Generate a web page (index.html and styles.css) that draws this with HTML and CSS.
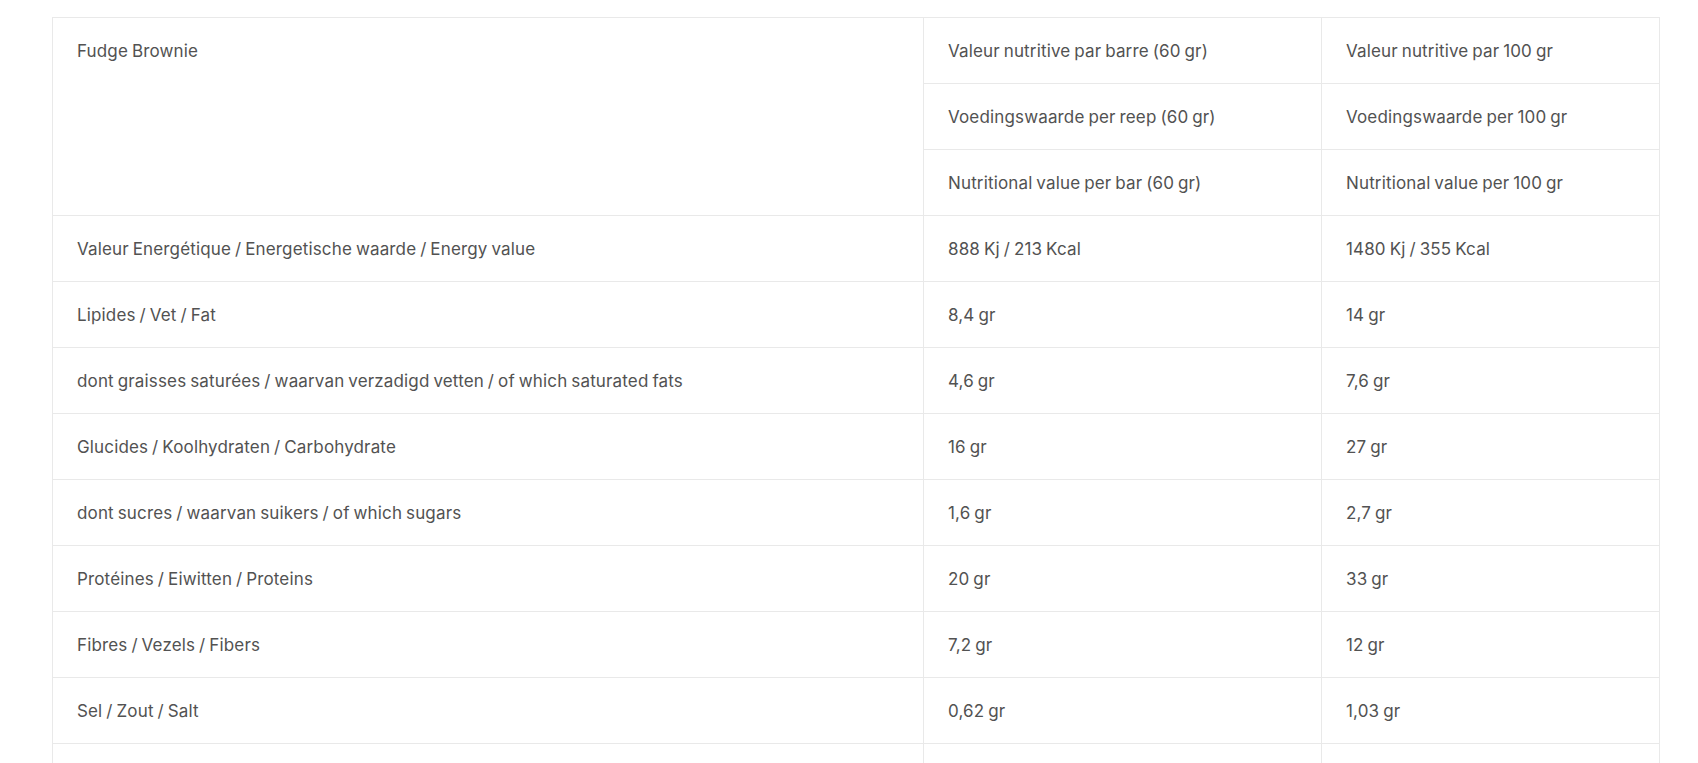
FILE: index.html
```html
<!DOCTYPE html>
<html lang="fr">
<head>
<meta charset="utf-8">
<title>Fudge Brownie</title>
<link rel="stylesheet" href="styles.css">
</head>
<body>
<div class="wrap">
<table class="nutri">
<colgroup><col class="c1"><col class="c2"><col class="c3"></colgroup>
<tbody>
<tr><td rowspan="3">Fudge Brownie</td><td>Valeur nutritive par barre (60 gr)</td><td>Valeur nutritive par 100 gr</td></tr>
<tr><td>Voedingswaarde per reep (60 gr)</td><td>Voedingswaarde per 100 gr</td></tr>
<tr><td>Nutritional value per bar (60 gr)</td><td>Nutritional value per 100 gr</td></tr>
<tr><td>Valeur Energétique / Energetische waarde / Energy value</td><td>888 Kj / 213 Kcal</td><td>1480 Kj / 355 Kcal</td></tr>
<tr><td>Lipides / Vet / Fat</td><td>8,4 gr</td><td>14 gr</td></tr>
<tr><td>dont graisses saturées / waarvan verzadigd vetten / of which saturated fats</td><td>4,6 gr</td><td>7,6 gr</td></tr>
<tr><td>Glucides / Koolhydraten / Carbohydrate</td><td>16 gr</td><td>27 gr</td></tr>
<tr><td>dont sucres / waarvan suikers / of which sugars</td><td>1,6 gr</td><td>2,7 gr</td></tr>
<tr><td>Protéines / Eiwitten / Proteins</td><td>20 gr</td><td>33 gr</td></tr>
<tr><td>Fibres / Vezels / Fibers</td><td>7,2 gr</td><td>12 gr</td></tr>
<tr><td>Sel / Zout / Salt</td><td>0,62 gr</td><td>1,03 gr</td></tr>
<tr><td>&nbsp;</td><td>&nbsp;</td><td>&nbsp;</td></tr>
</tbody>
</table>
</div>
</body>
</html>
```

FILE: styles.css
```css
html, body {
  margin: 0;
  padding: 0;
  background: #ffffff;
}
body {
  font-family: "Inter", "Lato", "Liberation Sans", sans-serif;
  color: #525252;
}
.wrap {
  padding: 17px 39px 0 52px;
}
.nutri {
  width: 1607px;
  border-collapse: collapse;
  table-layout: fixed;
}
.c1 { width: 871px; }
.c2 { width: 398px; }
.c3 { width: 338px; }
.nutri td {
  border: 1px solid #e9e9e9;
  padding: 21px 24px 19px;
  font-size: 17px;
  line-height: 25px;
  letter-spacing: 0.15px;
  word-spacing: -1px;
  vertical-align: top;
  text-align: left;
  white-space: nowrap;
}
```
